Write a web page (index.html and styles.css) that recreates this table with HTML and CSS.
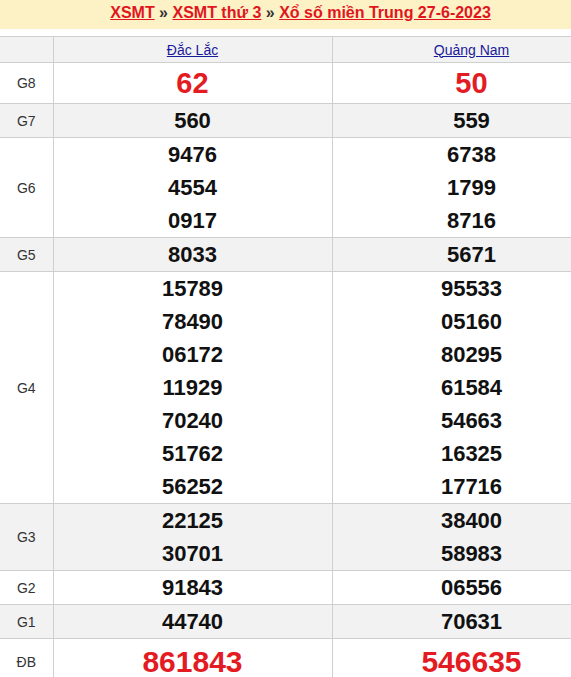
FILE: index.html
```html
<!DOCTYPE html>
<html lang="vi">
<head>
<meta charset="utf-8">
<title>XSMT 27-6-2023</title>
<link rel="stylesheet" href="styles.css">
</head>
<body>
<div class="page">
  <div class="crumb">
    <a href="#">XSMT</a> » <a href="#">XSMT thứ 3</a> » <a href="#">Xổ số miền Trung 27-6-2023</a>
  </div>
  <table class="kq">
    <colgroup><col class="c-label"><col class="c-prov"><col class="c-prov"></colgroup>
    <tr class="head">
      <td></td>
      <td><a href="#">Đắc Lắc</a></td>
      <td><a href="#">Quảng Nam</a></td>
    </tr>
    <tr class="g8">
      <td class="lbl">G8</td>
      <td><div class="n red">62</div></td>
      <td><div class="n red">50</div></td>
    </tr>
    <tr class="alt">
      <td class="lbl">G7</td>
      <td><div class="n">560</div></td>
      <td><div class="n">559</div></td>
    </tr>
    <tr>
      <td class="lbl">G6</td>
      <td><div class="n">9476</div><div class="n">4554</div><div class="n">0917</div></td>
      <td><div class="n">6738</div><div class="n">1799</div><div class="n">8716</div></td>
    </tr>
    <tr class="alt">
      <td class="lbl">G5</td>
      <td><div class="n">8033</div></td>
      <td><div class="n">5671</div></td>
    </tr>
    <tr>
      <td class="lbl">G4</td>
      <td><div class="n">15789</div><div class="n">78490</div><div class="n">06172</div><div class="n">11929</div><div class="n">70240</div><div class="n">51762</div><div class="n">56252</div></td>
      <td><div class="n">95533</div><div class="n">05160</div><div class="n">80295</div><div class="n">61584</div><div class="n">54663</div><div class="n">16325</div><div class="n">17716</div></td>
    </tr>
    <tr class="alt">
      <td class="lbl">G3</td>
      <td><div class="n">22125</div><div class="n">30701</div></td>
      <td><div class="n">38400</div><div class="n">58983</div></td>
    </tr>
    <tr>
      <td class="lbl">G2</td>
      <td><div class="n">91843</div></td>
      <td><div class="n">06556</div></td>
    </tr>
    <tr class="alt">
      <td class="lbl">G1</td>
      <td><div class="n">44740</div></td>
      <td><div class="n">70631</div></td>
    </tr>
    <tr class="db">
      <td class="lbl">ĐB</td>
      <td><div class="n red big">861843</div></td>
      <td><div class="n red big">546635</div></td>
    </tr>
  </table>
</div>
</body>
</html>
```
FILE: styles.css
```css
html, body {
  margin: 0;
  padding: 0;
  overflow: hidden;
  background: #fff;
}
body {
  font-family: "Liberation Sans", Arial, sans-serif;
  color: #222;
}
.page {
  width: 611px;
}
.crumb {
  height: 29px;
  line-height: 25px;
  background: #fdf1c6;
  text-align: center;
  font-size: 16px;
  font-weight: bold;
  color: #333;
  padding-right: 10px;
  margin-bottom: 7px;
}
.crumb a {
  color: #e0161e;
  text-decoration: underline;
}
.kq {
  width: 611px;
  border-collapse: collapse;
  table-layout: fixed;
}
.c-label { width: 53px; }
.c-prov { width: 279px; }
.kq td {
  border: 1px solid #cfcfcf;
  padding: 0;
  text-align: center;
  vertical-align: middle;
}
.kq tr > td:first-child { border-left: none; }
.head td {
  background: #f2f2f2;
  height: 25px;
  font-size: 14px;
}
.head a {
  color: #1a1a9c;
  text-decoration: underline;
}
.alt td { background: #f2f2f2; }
.lbl {
  font-size: 14px;
  color: #333;
}
.n {
  font-size: 22px;
  font-weight: bold;
  line-height: 33px;
  color: #111;
}
.g8 .n {
  line-height: 40px;
  font-size: 29px;
}
.red { color: #e31b23; }
.n.big {
  font-size: 30px;
  line-height: 46px;
}
```
